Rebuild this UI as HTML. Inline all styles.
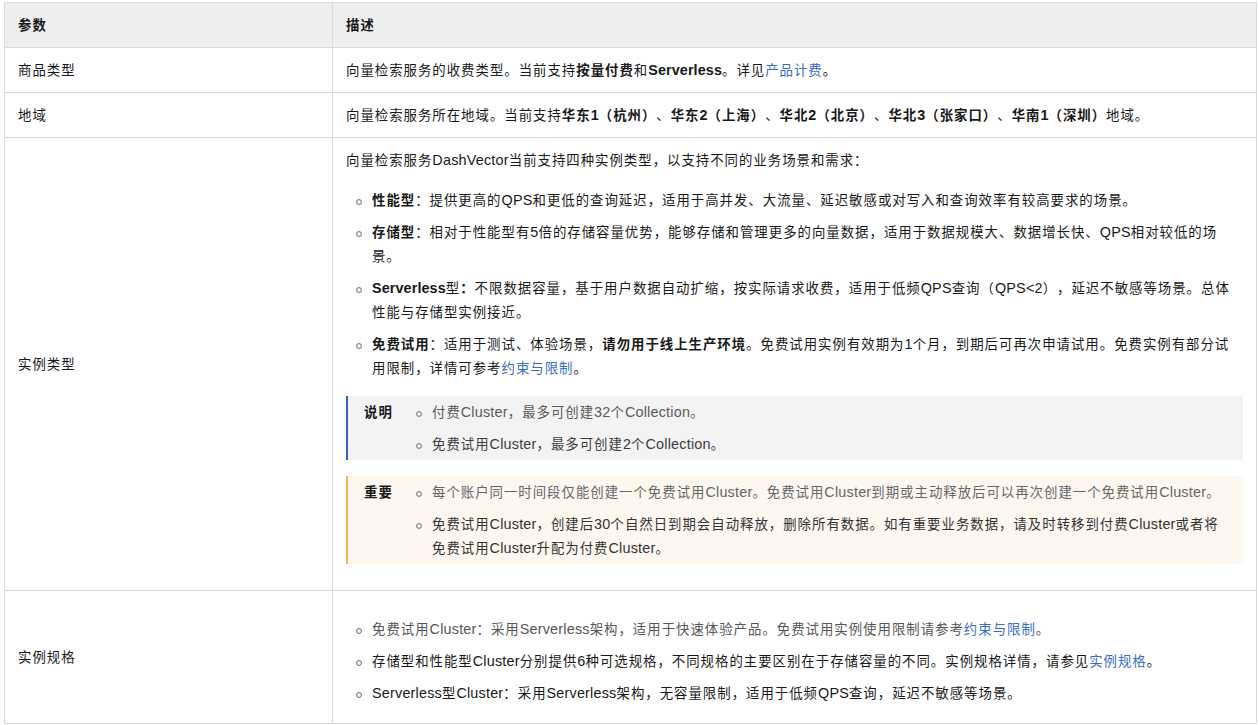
<!DOCTYPE html>
<html lang="zh-CN">
<head>
<meta charset="utf-8">
<title>DashVector</title>
<style>
html,body{margin:0;padding:0;background:#fff;}
body{width:1259px;height:725px;overflow:hidden;position:relative;
  font-family:"Liberation Sans","Noto Sans CJK SC",sans-serif;
  font-size:13.4px;letter-spacing:1px;line-height:24px;color:#181818;
  text-spacing-trim:space-all;}
.l{font-size:14.4px;letter-spacing:0.2px;line-height:1;}
table{position:absolute;left:4px;top:2px;width:1253px;border-collapse:separate;border-spacing:0;
  border-right:1px solid #d9d9d9;border-bottom:1px solid #d9d9d9;table-layout:fixed;}
td,th{border-left:1px solid #d9d9d9;border-top:1px solid #d9d9d9;padding:11px 13px 9px 13px;text-align:left;
  vertical-align:middle;font-weight:normal;box-sizing:border-box;}
th{background:#eeeeee;font-weight:bold;}
col.c1{width:328px;}
col.c2{width:924px;}
p{margin:0;}
b{font-weight:bold;}
b .l{letter-spacing:0.1px;}
a{color:#3a6bc5;text-decoration:none;}
ul{list-style:none;margin:0;padding:0 0 0 26px;}
ul.main{padding-top:8px;margin-bottom:15px;}
ul.last{padding-bottom:8px;margin-bottom:0;}
li,p,td,th{white-space:nowrap;}
li{position:relative;margin:8px 0 0 0;}
li::before{content:"";position:absolute;left:-17px;top:9px;width:8px;height:8px;background:radial-gradient(circle at 4px 4px,rgba(150,150,150,0) 1.35px,#969696 1.85px,#969696 2.7px,rgba(150,150,150,0) 3.2px);}
.g{color:#555;}
.note{margin:0 0 16px 0;border-left:2px solid #3064c0;background:#f3f3f3;padding:5px 16px 3px 16px;display:flex;}
.note.imp{margin-bottom:17px;border-left-color:#eab64a;background:#fdf7f0;}
.note .lab{font-weight:bold;width:42px;flex:none;}
.note ul{flex:1;padding-left:26px;color:#3c3c3c;}
.note li:first-child{color:#5a5a5a;}
.note.imp li{color:#333;}
.note.imp li:first-child{color:#666;}
.note li{margin:0;}
.note li+li{margin-top:8px;}
</style>
</head>
<body>
<table>
<colgroup><col class="c1"><col class="c2"></colgroup>
<tr><th>参数</th><th>描述</th></tr>
<tr><td>商品类型</td><td>向量检索服务的收费类型。当前支持<b>按量付费</b>和<b><span class="l">Serverless</span></b>。详见<a>产品计费</a>。</td></tr>
<tr><td>地域</td><td>向量检索服务所在地域。当前支持<b>华东<span class="l">1</span>（杭州）</b>、<b>华东<span class="l">2</span>（上海）</b>、<b>华北<span class="l">2</span>（北京）</b>、<b>华北<span class="l">3</span>（张家口）</b>、<b>华南<span class="l">1</span>（深圳）</b>地域。</td></tr>
<tr><td>实例类型</td><td>
<p>向量检索服务<span class="l">DashVector</span>当前支持四种实例类型，以支持不同的业务场景和需求：</p>
<ul class="main">
<li><b>性能型</b>：提供更高的<span class="l">QPS</span>和更低的查询延迟，适用于高并发、大流量、延迟敏感或对写入和查询效率有较高要求的场景。</li>
<li><b>存储型</b>：相对于性能型有<span class="l">5</span>倍的存储容量优势，能够存储和管理更多的向量数据，适用于数据规模大、数据增长快、<span class="l">QPS</span>相对较低的场<br>景。</li>
<li><b><span class="l">Serverless</span></b>型<b>：</b>不限数据容量，基于用户数据自动扩缩，按实际请求收费，适用于低频<span class="l">QPS</span>查询（<span class="l">QPS&lt;2</span>），延迟不敏感等场景。总体<br>性能与存储型实例接近。</li>
<li><b>免费试用</b>：适用于测试、体验场景，<b>请勿用于线上生产环境</b>。免费试用实例有效期为<span class="l">1</span>个月，到期后可再次申请试用。免费实例有部分试<br>用限制，详情可参考<a>约束与限制</a>。</li>
</ul>
<div class="note"><div class="lab">说明</div><ul>
<li>付费<span class="l">Cluster</span>，最多可创建<span class="l">32</span>个<span class="l">Collection</span>。</li>
<li>免费试用<span class="l">Cluster</span>，最多可创建<span class="l">2</span>个<span class="l">Collection</span>。</li>
</ul></div>
<div class="note imp"><div class="lab">重要</div><ul>
<li>每个账户同一时间段仅能创建一个免费试用<span class="l">Cluster</span>。免费试用<span class="l">Cluster</span>到期或主动释放后可以再次创建一个免费试用<span class="l">Cluster</span>。</li>
<li>免费试用<span class="l">Cluster</span>，创建后<span class="l">30</span>个自然日到期会自动释放，删除所有数据。如有重要业务数据，请及时转移到付费<span class="l">Cluster</span>或者将<br>免费试用<span class="l">Cluster</span>升配为付费<span class="l">Cluster</span>。</li>
</ul></div>
</td></tr>
<tr><td>实例规格</td><td>
<ul class="main last">
<li class="g">免费试用<span class="l">Cluster</span>：采用<span class="l">Serverless</span>架构，适用于快速体验产品。免费试用实例使用限制请参考<a>约束与限制</a>。</li>
<li>存储型和性能型<span class="l">Cluster</span>分别提供<span class="l">6</span>种可选规格，不同规格的主要区别在于存储容量的不同。实例规格详情，请参见<a>实例规格</a>。</li>
<li><span class="l">Serverless</span>型<span class="l">Cluster</span>：采用<span class="l">Serverless</span>架构，无容量限制，适用于低频<span class="l">QPS</span>查询，延迟不敏感等场景。</li>
</ul>
</td></tr>
</table>
</body>
</html>
